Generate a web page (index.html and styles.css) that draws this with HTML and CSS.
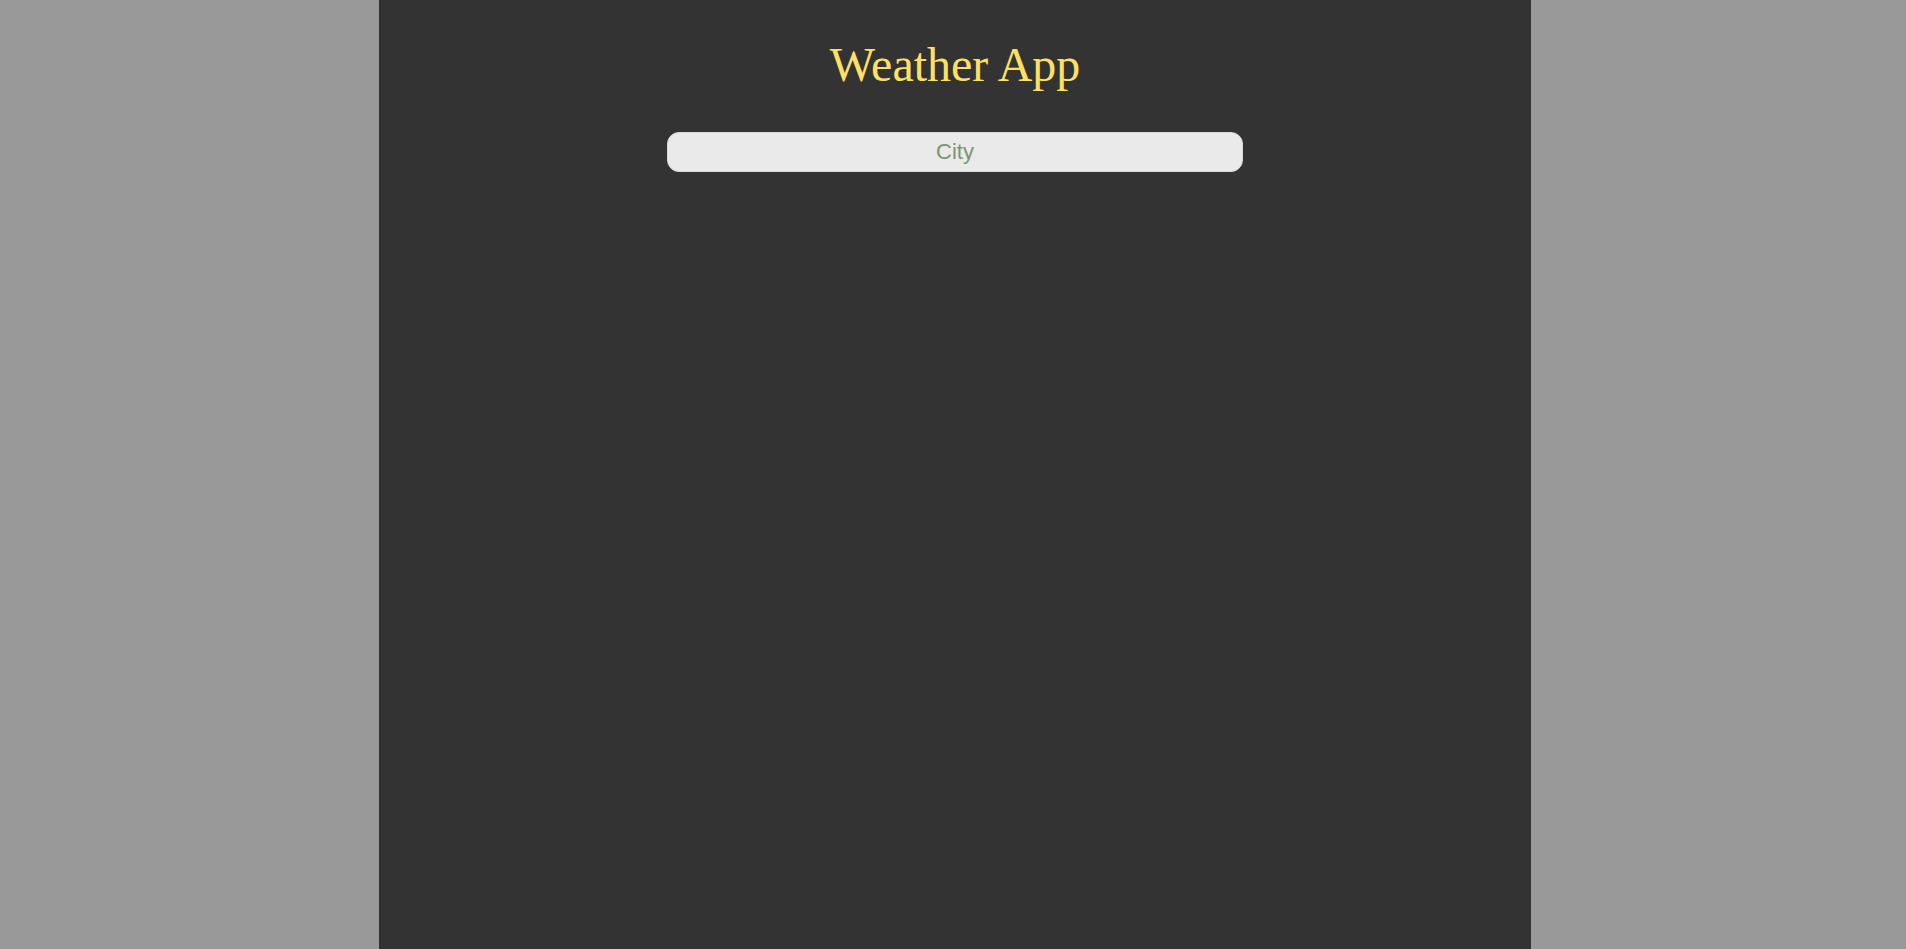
FILE: index.html
```html
<!DOCTYPE html>
<html lang="en">
<head>
<meta charset="utf-8">
<title>Weather App</title>
<link rel="stylesheet" href="styles.css">
</head>
<body>
<main class="app">
  <h1 class="title">Weather App</h1>
  <form class="search">
    <input class="city" type="text" placeholder="City">
  </form>
</main>
</body>
</html>
```
FILE: styles.css
```css
html, body {
  margin: 0;
  padding: 0;
  height: 100%;
}
body {
  background: #999999;
  display: flex;
  justify-content: flex-start;
}
.app {
  width: 1152px;
  margin-left: 379px;
  min-height: 100%;
  background: #333333;
  display: flex;
  flex-direction: column;
  align-items: center;
}
.title {
  font-family: "Liberation Serif", "Times New Roman", serif;
  font-weight: normal;
  font-size: 48px;
  line-height: 1;
  color: #ffe066;
  margin: 41px 0 0 0;
}
.search {
  margin-top: 43px;
  width: 576px;
}
.city {
  box-sizing: border-box;
  width: 100%;
  height: 40px;
  border: 1px solid #d8d8d8;
  border-radius: 12px;
  background: #eaeaea;
  font-family: "Liberation Sans", Arial, sans-serif;
  font-size: 22px;
  text-align: center;
  outline: none;
}
.city::placeholder {
  color: #7b9472;
}
```
